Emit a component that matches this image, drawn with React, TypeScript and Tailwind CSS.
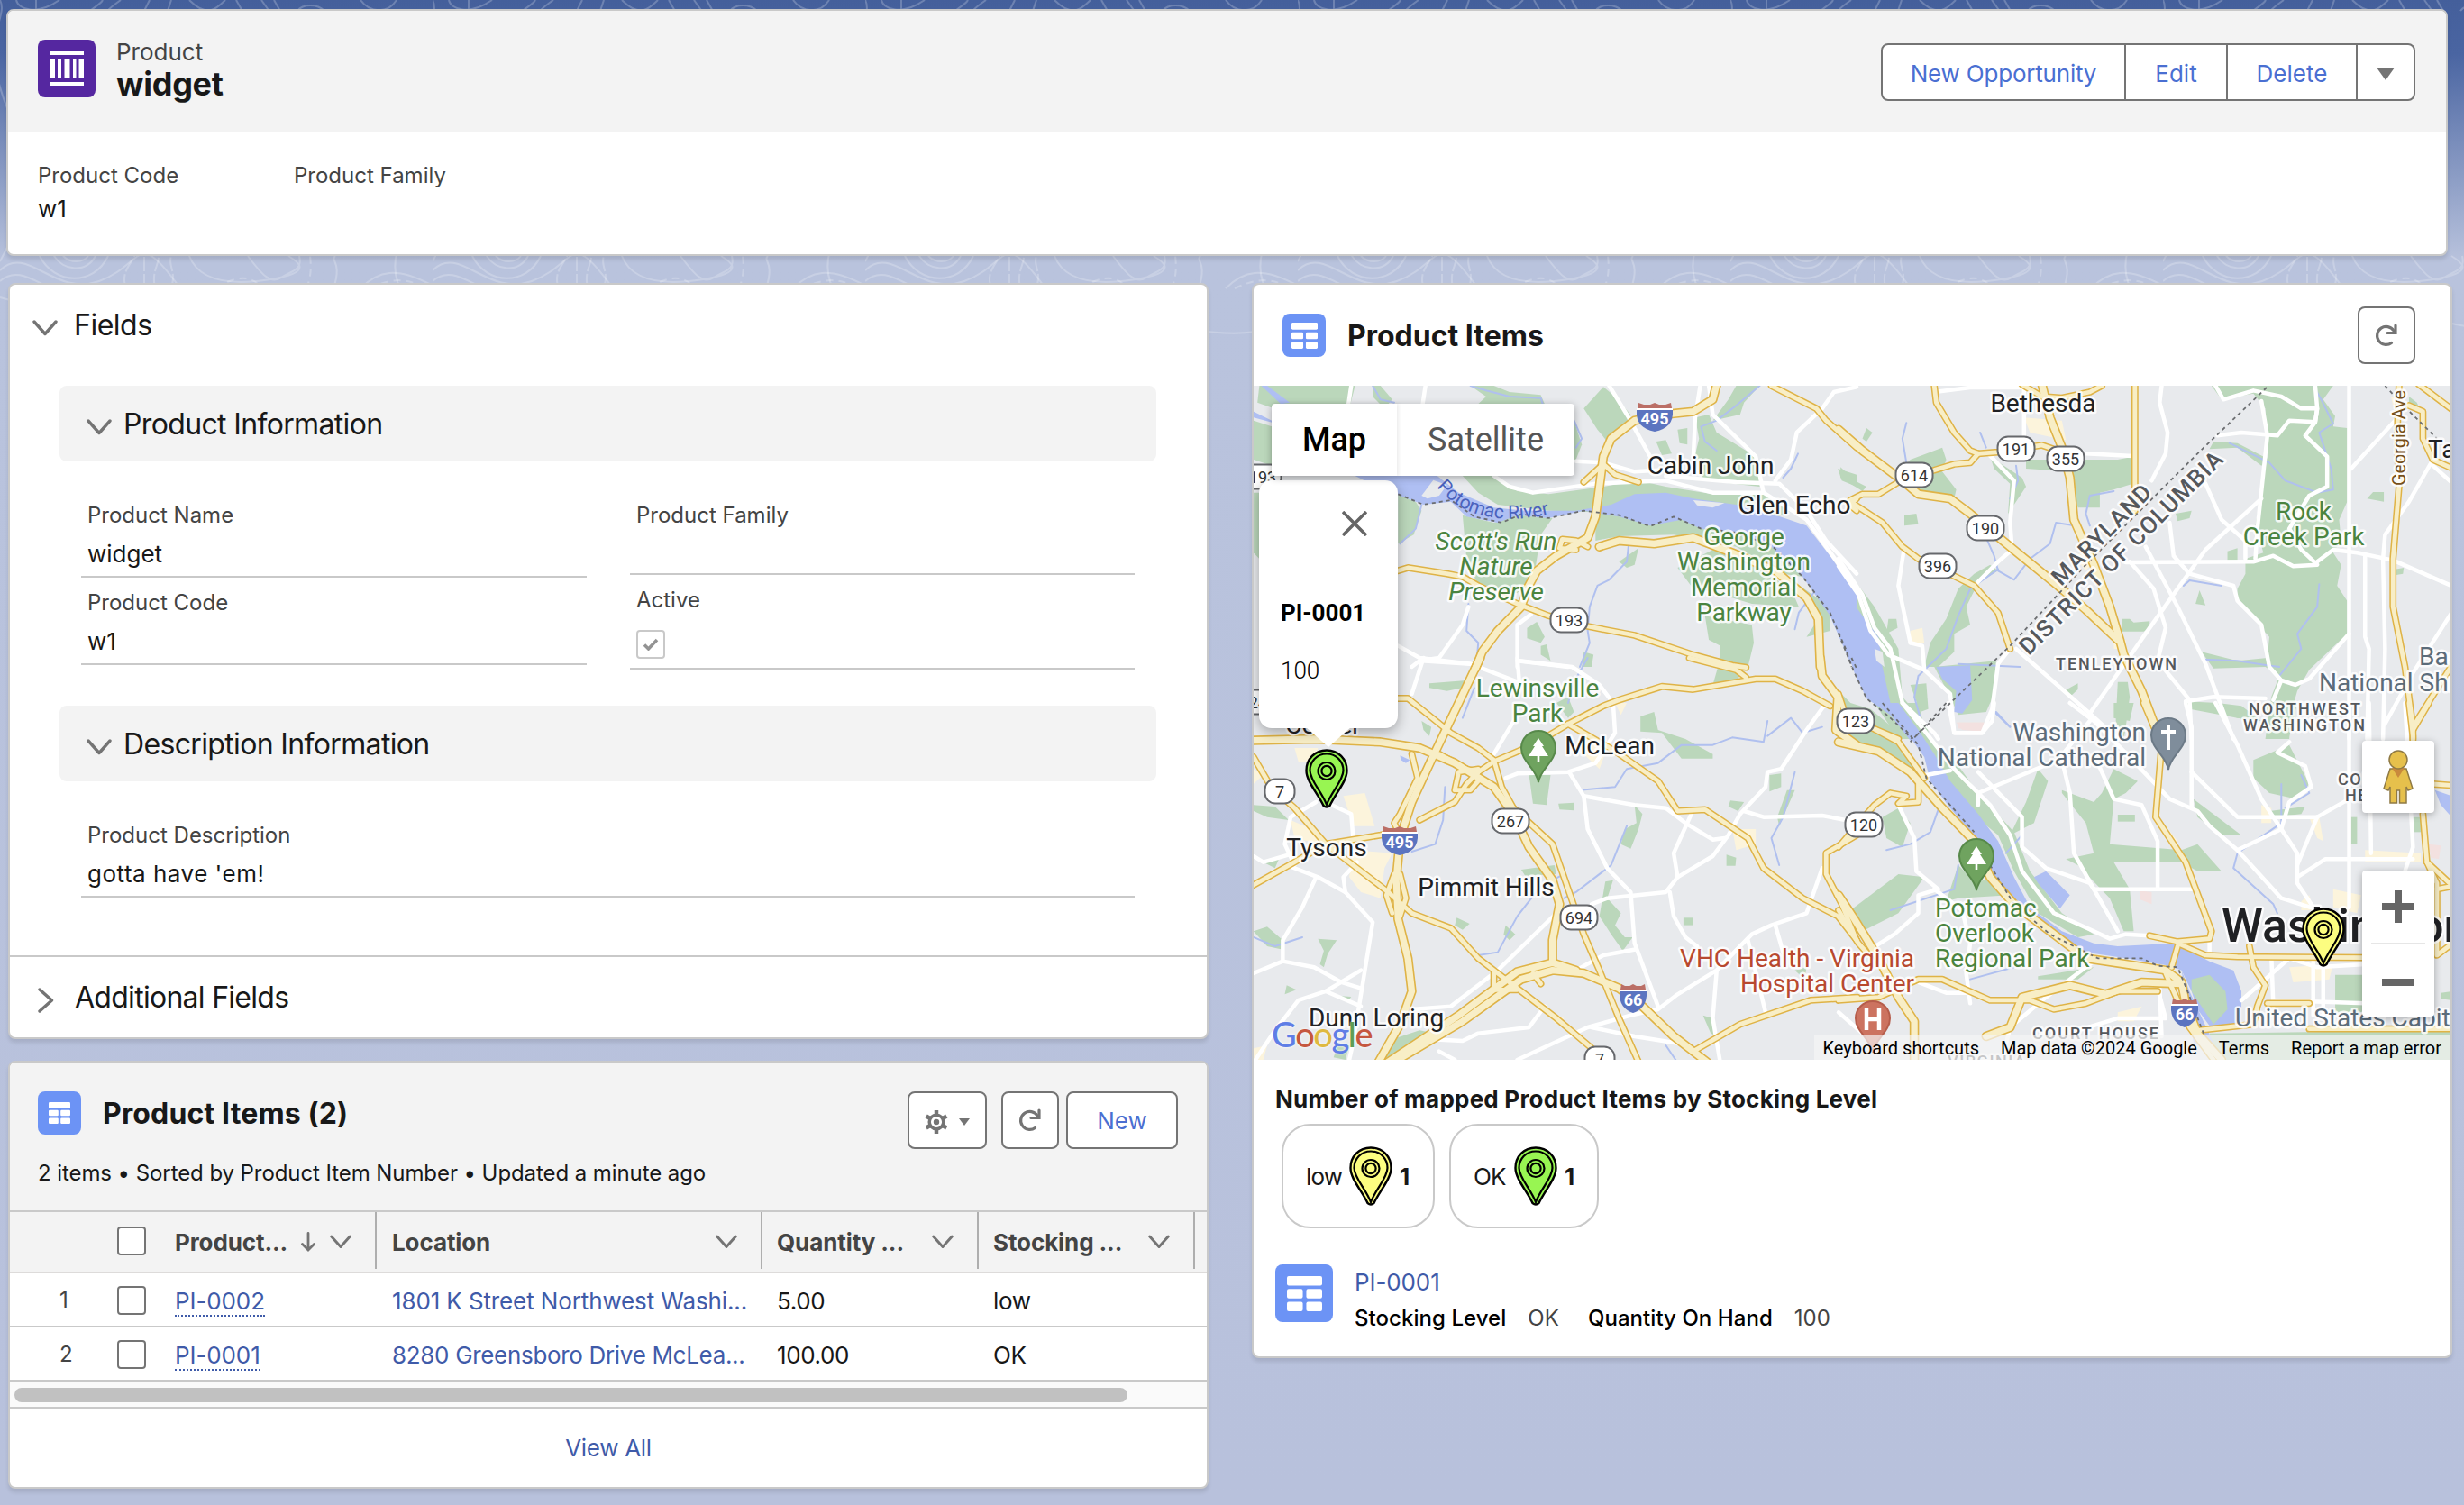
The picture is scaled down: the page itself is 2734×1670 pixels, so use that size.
import React from "react";

type Quad = {
  t: string;
  green: string[];
  beige: string[];
  pink: string[];
  water: string[];
  streams: string[];
  island: string[];
  white: string[];
  mid: string[];
  wide: string[];
  dash: string[];
};

const QUADS: Quad[] = [
  {
    t: "translate(1380 300) scale(.4337 .3333)",
    green: [
      "40,384 285,384 270,460 100,470 35,440",
      "330,384 350,384 380,430 360,460 330,420",
      "580,384 640,384 680,405 760,415 770,445 600,445 620,420",
      "920,388 950,420 990,480 985,520 930,570 905,530 870,460",
      "845,500 865,580 850,630 840,640",
      "25,500 72,520 72,650 25,630",
      "560,684 640,684 700,735 780,745 920,720 1010,700 1080,720 1200,745 1330,740 1400,800 1350,830 1250,790 1130,770 1050,750 960,800 900,805 780,800 650,780 600,740",
      "560,815 640,840 700,815 790,825 760,880 745,1000 700,1075 600,1050 570,960",
      "395,745 440,770 455,800 435,880 395,910",
      "900,805 1040,830 1130,830 1230,850 1360,900 1430,1020 1380,1010 1260,920 1180,900 1100,880 960,885 900,900",
      "1110,990 1200,930 1300,980 1400,1060 1420,1120 1300,1110 1200,1070 1150,1060",
      "1180,1150 1300,1180 1305,1240 1290,1320 1215,1320 1220,1250 1190,1230",
      "725,1190 750,1170 770,1220 760,1240 725,1225",
      "760,1250 775,1245 785,1300 760,1280",
      "1155,490 1190,480 1210,540 1260,580 1310,620 1320,720 1180,700 1150,640 1165,560",
      "1260,384 1320,384 1280,440 1270,480 1200,500 1240,430",
      "1055,570 1080,565 1095,610 1070,615",
      "1110,530 1135,525 1135,580 1115,575",
      "1520,660 1568,680 1568,720 1530,700",
      "1400,1030 1500,1120 1500,1200 1440,1220 1470,1160",
      "960,970 1010,925 1000,980 980,990",
      "25,740 40,740 40,960 25,940",
      "870,1270 895,1280 890,1320 865,1320",
    ],
    beige: [],
    pink: [],
    water: [
      "285,684 495,684 550,740 640,790 720,800 850,800 940,780 1000,745 1080,740 1150,760 1260,780 1350,810 1440,850 1500,950 1568,1080 1568,1330 1550,1300 1500,1150 1430,1020 1350,920 1250,870 1170,860 1120,830 1040,850 960,820 870,800 780,825 700,815 650,840 570,820 530,770 460,780 400,750 340,720",
      "45,384 60,384 118,440 95,445",
      "25,470 72,500 72,506 25,490",
    ],
    streams: [
      "330,384 350,430 385,440",
      "580,384 620,400 680,420 760,425 765,445",
      "455,780 440,860 400,910",
      "985,910 980,970 935,1030 905,1050 885,1120 880,1200 885,1240 860,1320",
      "575,1110 570,1200 600,1240 595,1320",
      "850,590 865,560 845,500",
      "1320,384 1260,450 1210,500 1170,520 1180,570 1210,600",
      "1418,610 1400,660 1380,690",
      "1460,1070 1420,1140 1410,1195",
    ],
    island: ["455,750 485,698 520,715 500,750 470,760", "1150,765 1230,775 1200,790 1160,782"],
    white: [
      "275,384 268,444",
      "465,384 458,444",
      "935,384 985,490 1040,620",
      "1168,384 1155,490 1150,630",
      "1190,384 1200,480 1310,620 1330,740",
      "1568,388 1510,405 1480,460 1415,540 1400,630 1360,700",
      "640,684 680,720 740,740 900,710 1080,700 1200,740 1330,740 1440,830 1490,920 1568,1060",
      "1080,685 1260,705 1370,710 1440,800 1490,900 1568,1010",
      "850,635 920,640 1000,670 1060,665",
      "395,1250 450,1290 580,1310",
      "575,1120 560,1180 500,1290 450,1300 430,1320",
      "735,1145 700,1180 700,1320",
      "700,1300 830,1320",
    ],
    mid: [
      "1350,384 1465,460 1490,500 1568,590",
      "395,1000 420,990 520,1010 560,1020 600,1050 700,1110 780,1150 880,1185 1000,1215 1150,1280 1250,1315 1285,1322",
      "870,705 920,645 950,680 1010,705",
      "880,920 850,900 815,895 808,925 850,930",
      "1568,760 1550,780 1568,800",
    ],
    wide: [
      "1210,380 1200,430 1150,470 1090,478 1000,500 940,560 920,620 910,720 900,820 880,890 800,950 750,1000 725,1060 710,1120 650,1200 610,1270 593,1325",
      "910,920 960,900 1050,910 1150,890 1250,940 1360,1000 1440,1090 1470,1160 1475,1320",
    ],
    dash: ["395,745 460,780 530,765 590,820 660,840 710,812 780,825 870,800 900,805 960,815 1040,852 1100,820 1170,860 1250,870 1350,915 1430,1020 1500,1140 1540,1260 1555,1320"],
  },
  {
    t: "translate(2040 420) scale(.4426 .3333)",
    green: [
      "935,24 1240,24 1215,70 1245,125 1240,160 1275,165 1275,410 1255,470 1260,540 1240,580 1260,620 1250,690 1275,740 1275,850 1180,970 1150,1040 1135,1110 1130,1200 1070,1200 1085,1060 1105,990 1070,960 940,965 910,910 1000,940 1075,930 1080,860 1040,800 1000,740 1000,700 1020,650 1020,600 1065,580 1045,490 1075,260 1070,100 1040,50 960,70",
      "470,270 700,270 738,260 738,350 690,370 655,380 655,430 600,430 580,310 470,300",
      "940,210 1000,215 1080,270 1060,290 1000,230 930,235",
      "160,300 180,270 260,230 270,270 260,310 295,370 290,400 190,370",
      "70,165 85,180 70,210 60,200",
      "165,455 195,450 200,485 165,490",
      "5,295 40,340 70,360 60,375 5,330",
      "845,450 885,440 880,465 850,475",
      "1325,400 1340,378 1367,378 1367,410",
      "975,575 1000,565 1000,605 975,605",
      "905,705 920,755 895,750",
      "380,620 400,640 350,680 320,760 330,820 290,850 290,910 250,960 215,960 230,880 270,800 300,700 340,650",
      "240,960 395,940 390,1050 370,1110 300,1120 280,1060",
      "380,260 460,330 470,360 440,420 425,450 430,350 390,300",
      "710,800 730,800 740,812 780,808 780,830 765,842 710,842",
      "565,1040 600,1015 600,1035 580,1060",
      "700,1010 725,1010 730,1060 720,1160 715,1200 695,1140",
      "870,1075 950,1080 1010,1090 1060,1140 1000,1130 950,1100 880,1100",
      "0,600 90,760 150,900 160,1060 220,1150 230,1200 150,1200 100,1100 60,1020 60,880",
      "180,1020 220,1015 225,1100 205,1110",
      "1395,635 1417,630 1415,650 1395,655",
      "125,800 145,800 148,830 120,850",
      "0,1040 30,1080 80,1100 170,1200 0,1200",
      "1430,60 1450,80 1460,110 1430,85",
    ],
    beige: [
      "465,130 560,140 570,205 480,180",
      "180,840 210,830 215,880 180,885",
      "690,870 720,870 720,900 690,900",
      "1385,60 1410,60 1410,90 1390,90",
      "590,590 610,580 640,610 620,640",
    ],
    pink: ["300,1145 365,1145 365,1175 300,1165"],
    water: [
      "0,680 60,790 100,860 110,960 130,1080 190,1160 210,1205 180,1205 130,1120 70,1065 40,980 20,900 0,850",
      "245,960 330,955 335,1070 310,1115 290,1110 295,1040 260,1000",
    ],
    streams: [
      "170,148 160,200 170,280",
      "355,180 370,230",
      "445,290 450,340 430,400",
      "400,635 330,700 300,790 270,900 200,990 190,1060 205,1130",
      "585,488 545,480 530,550 480,600 440,670 400,640 390,590 370,530",
      "690,375 630,390 620,450 630,490",
      "980,215 1080,280 1120,340 1200,380 1240,370 1235,300 1205,180 1240,150 1210,70 1190,24",
      "1205,685 1200,760 1150,850 1160,900 1105,990",
      "865,690 880,672 960,690",
      "915,935 1000,940 1075,955 1105,960",
      "395,1110 430,1160",
      "300,950 455,960",
    ],
    island: ["90,900 110,910 115,960 95,940"],
    white: [
      "810,24 805,80 825,180 820,250 785,340",
      "240,45 330,30 460,30",
      "465,24 465,190",
      "945,24 965,70 1040,40 1110,60 1160,100 1200,100 1195,145 1130,140 1100,190 1010,180 950,190",
      "1060,75 1075,190 1050,500 1045,600",
      "1195,24 1200,100 1195,145 1170,190 1225,260 1225,360 1180,390 1130,500 1160,570 1200,620 1140,625 1090,590 1040,610 720,612",
      "1280,24 1280,1200",
      "1200,610 1240,570 1300,580 1390,605 1537,690",
      "1395,140 1285,300",
      "1490,270 1430,410 1370,520 1365,600 1370,900 1365,1200",
      "1320,590 1320,860 1330,900 1325,1200",
      "620,250 738,258",
      "375,250 440,340 430,480 435,570 400,610 340,690",
      "0,600 60,720 90,830 130,900 160,1080 240,1180 250,1200",
      "0,625 50,720 80,840 125,920 215,970",
      "165,560 150,690 180,880",
      "180,880 210,890 215,970 280,1050 290,1180 360,1180 385,1100 400,950 430,900",
      "445,900 630,1115 700,1200",
      "630,1115 780,830 920,570 1060,400",
      "920,350 960,470 1020,540 1020,600",
      "770,560 850,760 920,950 990,1200",
      "730,610 790,700 820,830 800,940 880,1070 885,1200",
      "830,480 840,590 880,650 990,690 1000,740 1060,820 1080,960 1110,1005 1145,1020 1180,1000 1280,850",
      "870,1075 940,1060 1070,1065",
      "1537,780 1440,980 1370,1150",
      "1110,1005 1090,1070",
      "1490,290 1540,350",
    ],
    mid: [
      "240,24 245,80 290,180 330,240 350,250 400,245 510,222 550,240 560,250",
      "30,405 60,385 100,385 150,345 240,305 290,285 330,280 350,250",
      "30,410 110,480 160,560 200,600 340,690 400,780 430,900",
      "743,24 743,440",
      "660,24 630,45 560,65 510,60 460,20",
      "1430,90 1465,110 1465,200 1490,270 1540,300",
      "1455,20 1540,105",
      "1405,24 1400,200 1405,360 1390,600 1390,760 1420,960 1440,1160 1440,1200",
      "1440,1160 1540,950",
      "0,1050 15,1110 60,1150 150,1200",
    ],
    wide: [
      "0,170 60,240 160,340 200,385 280,400 330,450 430,560 550,690 620,770 700,870",
      "510,20 530,130 560,230 580,330 590,470 640,620 680,760 705,870 715,920 760,1040 800,1180 805,1200",
    ],
    dash: [
      "1073,30 900,250 620,620 430,890 190,1195",
      "1370,24 1420,95 1500,200",
      "0,850 40,980 70,1065 130,1130 185,1200",
    ],
  },
  {
    t: "translate(1380 730) scale(.4337 .3333)",
    green: [
      "475,85 570,75 560,100 520,110 475,100",
      "455,210 480,230 475,260 460,240",
      "730,390 785,390 775,490 740,485",
      "805,485 845,482 845,508 808,505",
      "25,490 80,495 115,540 60,530 25,510",
      "1015,195 1050,180 1060,240 1130,270 1200,320 1200,335 1120,335 1070,250 1015,245",
      "800,150 830,130 845,180 830,200",
      "1345,390 1375,385 1375,430 1345,445",
      "1245,475 1280,480 1265,510 1240,495",
      "1000,490 1020,520 1010,570 990,635 965,620 975,570 1005,550",
      "1235,655 1260,665 1258,692 1235,692",
      "710,705 795,690 800,720 720,725",
      "925,745 945,740 930,800 965,850 950,890 975,930 995,930 970,975 940,920 910,860",
      "545,865 578,885 560,905 540,890",
      "670,890 695,920 680,940 665,920",
      "25,910 60,895 100,940 95,970 60,960",
      "190,935 238,940 215,985 205,1030 195,1020 205,975",
      "1125,865 1150,865 1150,890 1125,890",
      "1175,1190 1200,1200 1210,1260 1195,1250",
      "110,1090 135,1105 105,1120",
      "1220,0 1295,0 1270,60 1250,90 1200,90",
      "240,1125 275,1128 265,1145",
      "50,680 90,670 80,700",
      "1500,70 1568,200 1568,310 1540,200",
      "1390,440 1410,440 1390,500 1370,560 1365,530",
      "450,1240 490,1250 400,1310 360,1338 380,1270",
      "240,1290 270,1290 260,1338 230,1330",
      "1410,1040 1440,1030 1435,1070",
    ],
    beige: [
      "255,460 310,450 335,560 280,560",
      "280,640 380,650 360,700 350,800 300,780 270,730",
      "120,540 190,580 200,620 130,600",
      "860,250 930,300 910,370 870,320",
      "1250,570 1310,570 1310,620 1260,640",
      "950,150 980,150 965,190",
      "130,300 190,300 180,350 140,345",
      "760,1160 820,1200 800,1220",
      "25,1300 60,1290 50,1338 25,1338",
      "25,370 50,390 25,420",
    ],
    pink: [],
    water: ["400,325 425,340 415,350 402,340"],
    streams: [
      "880,0 845,80 830,150",
      "590,100 560,200",
      "860,440 950,430 980,370 1060,350 1120,290 1200,290 1250,265 1330,280 1340,210",
      "1340,260 1400,200 1430,250 1480,230",
      "1410,380 1380,530 1350,600 1370,690",
      "515,430 510,540 490,620 430,645",
      "980,560 940,690 850,780 820,800",
      "820,720 760,760 700,860 650,980 600,990",
      "25,930 80,960 150,930",
      "1080,1290 1105,1338",
    ],
    island: [],
    white: [
      "455,10 580,20 640,50 700,80",
      "460,0 430,120",
      "700,0 705,80",
      "705,10 840,30 910,90 945,150 950,250 900,350 830,380 700,385 670,400",
      "700,190 640,320",
      "835,385 870,460 880,570 930,700 990,780 1000,950 1060,1160",
      "870,460 1000,490 1080,500 1130,550 1200,605 1230,600",
      "1490,150 1440,240 1375,370 1340,380 1335,430 1270,520 1240,590 1200,660 1110,730 1080,780 930,800 890,820",
      "1145,520 1100,650 1110,730",
      "1280,510 1330,530 1480,525 1540,540",
      "1090,780 1100,860 1130,930 1160,960",
      "1480,700 1440,850 1350,890 1300,920 1210,1040 1110,1120 1060,1170 990,1190 880,1230 700,1338",
      "1210,1040 1200,1200 1218,1338",
      "1290,940 1335,1180",
      "1360,890 1380,980",
      "800,850 650,1040 530,1160 430,1170",
      "1005,970 920,990 850,1040",
      "25,660 50,680 130,650",
      "110,690 190,730 260,780 330,880 310,1040 280,1280 270,1338",
      "185,730 150,830 100,940 100,1010 25,1050",
      "100,1010 180,1030 250,1080 300,1100",
      "300,1040 210,1110 140,1140 80,1240 30,1338",
      "210,1110 300,1160",
      "185,480 120,530 105,620 130,690",
      "225,490 275,520 280,600",
      "290,680 255,730 260,780",
      "480,1270 560,1275 600,1250 730,1230 770,1160",
      "890,1230 1000,1260 1120,1285",
      "500,1310 540,1338",
    ],
    mid: [
      "395,135 420,135 530,250 600,300 640,340 660,430 690,500",
      "600,380 640,345 740,290 830,220 920,160 960,140 1070,95 1150,105 1310,70 1360,70 1430,110 1500,160",
      "1140,0 1260,40 1285,65",
      "830,220 950,310 1060,410 1110,510 1180,505 1290,600 1330,700 1430,800 1520,860 1568,940",
      "690,500 740,560 790,620 830,770 870,920 910,1040 960,1200 1010,1345",
      "25,330 70,430 130,500 210,620 310,720 370,780 430,850 530,900 600,1000 660,1060 700,1100 800,1200 900,1310",
      "20,760 130,680 210,620 350,590 390,580",
      "1568,590 1490,650 1490,720 1530,820 1568,940",
      "1150,1310 1270,1220 1450,1140 1570,1130",
      "430,320 445,400 400,520 385,550 400,590",
      "450,540 540,480 570,420 600,380",
      "600,370 550,380 540,440 580,440 600,410",
      "640,1050 640,1105 700,1105",
      "740,1050 760,1085",
      "385,720 365,790 380,850",
      "400,720 415,800 400,860",
      "500,320 570,370 600,380",
    ],
    wide: [
      "20,275 180,270 350,280 450,300 540,350 640,430 690,520 730,630 790,740 808,820 790,940 790,1010",
      "605,0 480,340 430,480 400,600 390,740 395,870 420,1000 430,1110 400,1220 345,1345",
      "370,1345 550,1190 700,1045 790,1015 850,1040",
      "385,1345 560,1210 710,1070 790,1040 870,1050 960,1100 1020,1160 1100,1260 1185,1345",
      "1475,0 1480,60 1520,130 1515,240 1568,290",
    ],
    dash: ["1555,0 1570,40"],
  },
  {
    t: "translate(2040 780) scale(.4426 .3333)",
    green: [
      "130,0 200,0 220,110 290,190 350,300 440,430 480,560 560,700 640,770 600,780 500,700 440,560 400,440 300,330 240,240 200,120",
      "0,60 110,100 180,180 220,270 340,440 330,440 180,230 100,160 0,120",
      "500,220 525,260 490,400 430,440 470,330",
      "560,290 640,330 660,300 690,220 750,260 720,300 690,320 680,470 860,490 900,470 960,560 900,560 860,530 690,530 730,620 740,760 715,760 680,650 600,540 570,520 640,500 620,400 560,300",
      "700,372 743,372 743,395 700,395",
      "690,0 740,0 730,60 690,50",
      "110,380 150,350 180,400 160,480 120,450",
      "30,690 150,570 215,580 150,700 60,760",
      "300,540 345,600 400,570 430,640 300,650 270,660",
      "1040,190 1130,140 1180,270 1150,320 1080,300 1040,250",
      "890,320 1010,440 960,440 900,380",
      "1080,360 1170,345 1160,370 1090,380",
      "1285,380 1300,380 1300,470 1285,470",
      "1245,905 1320,905 1320,1030 1245,1030",
      "1510,965 1537,960 1537,990 1510,985",
      "1440,380 1460,380 1460,430 1440,430",
      "930,1100 1537,1090 1537,1188 930,1188",
      "1070,0 1150,0 1130,110 1080,60",
      "500,910 640,880 600,920 500,920",
      "870,0 960,10 1060,60 1000,50 880,20",
    ],
    beige: [
      "1320,490 1460,500 1460,530 1320,530",
      "1130,880 1240,870 1230,920 1140,930",
      "1240,620 1310,640 1300,700 1240,680",
      "1180,380 1205,380 1215,460 1200,450",
      "1060,340 1085,350 1085,400 1060,400",
      "700,1030 760,1010 740,1060 700,1060",
      "820,410 850,460 835,470 815,430",
      "1160,660 1180,640 1190,690 1160,690",
    ],
    pink: ["295,65 365,65 360,95 310,90", "755,625 785,630 785,670 757,655", "1480,470 1510,475 1505,520 1485,515"],
    water: [
      "90,0 150,0 200,90 240,170 280,260 350,370 400,460 440,580 480,680 560,760 640,800 700,810 840,800 930,860 990,890 1010,960 1010,1080 930,1075 900,1020 885,960 860,890 830,875 720,850 620,830 520,750 440,670 390,580 370,490 280,350 230,260 215,180 150,60",
      "490,580 520,560 580,640 555,685 500,600",
      "1495,290 1537,310 1537,380 1510,340",
      "860,890 880,960 960,1190 890,1130",
    ],
    streams: [
      "395,35 430,80",
      "250,355 230,430 180,470 120,490",
      "300,540 290,620 130,690",
      "460,440 420,500",
      "1110,270 1110,400 1000,500 990,550 1090,670 1100,700",
      "1160,240 1180,300 1120,350",
      "330,920 440,880",
    ],
    island: [],
    white: [
      "160,0 220,100 290,220 380,340 430,440 460,560 540,700 640,760 680,785 720,770 780,775",
      "220,240 280,225",
      "275,0 290,100 360,100 385,60 390,0",
      "580,0 640,60 700,140 780,250 830,320 900,360 930,410 1000,490 1110,650 1230,700",
      "630,60 550,190 350,300 350,340",
      "870,0 885,80 885,350",
      "945,0 1000,140 1060,320 1150,500 1150,600 1200,700",
      "885,230 1000,380 1200,380 1320,290",
      "1130,130 1100,165 1170,210 1185,280 1130,330 1110,420 1000,490",
      "560,190 580,300 590,500 640,620 700,760",
      "350,230 460,380 460,480 520,550 630,600 640,620 885,620",
      "650,200 690,320 760,340 800,460 800,620",
      "1280,0 1280,680",
      "1150,580 1220,520 1320,520 1440,520",
      "150,340 190,450 195,560 250,620 200,640 200,700 140,770 80,820",
      "240,620 310,690 330,800 320,900 330,1000",
      "0,1030 60,1100",
      "930,780 930,840",
      "1085,840 1090,1010",
      "1190,860 1190,1040",
      "1215,860 1215,1040",
      "1090,990 1320,1000",
      "1010,990 1130,850 1200,880 1320,870",
      "1330,0 1335,500",
      "1420,0 1440,480 1420,560",
      "1200,380 1150,540",
      "200,930 270,965 340,965",
      "410,1190 430,1080 520,980 620,880 650,850",
      "800,950 820,1050 700,1050 600,1090",
      "805,950 810,1110",
    ],
    mid: [
      "765,0 810,140 795,380 870,530 935,760 930,785 850,795 780,775",
      "80,80 150,130 215,250",
      "0,480 90,340 130,300 170,310 150,335 200,330 200,270",
      "850,800 920,840 1000,845 1320,848",
      "850,810 835,880",
      "0,990 100,980 200,920 260,920 380,990 480,990 540,1020 620,1000 700,960 800,960",
      "1030,810 1040,880 1070,940 1050,1010 1040,1070 900,1090",
      "1430,0 1440,110 1440,200",
      "1480,0 1440,90",
      "1490,270 1540,275",
      "1465,370 1475,530 1500,600 1500,840 1540,800",
      "1475,530 1540,610 1500,620",
      "820,900 880,1080 940,1188",
      "1180,1085 1540,1085",
      "0,690 50,800 70,830",
      "1075,1000 1180,1000",
    ],
    wide: [
      "0,130 100,160 180,230 260,350 340,460 380,580 440,670 520,750 620,850 720,870 820,890 860,930 870,1000 900,1100 960,1188",
      "0,640 40,720 100,850 150,980 190,1060 190,1188",
      "370,1110 430,1080 460,980 580,940 670,970 760,930 860,935",
    ],
    dash: [
      "110,0 200,140 220,250 340,430",
      "270,0 180,130",
      "380,540 440,670 530,770 650,850 760,850 800,875 850,880 875,960 915,1100",
    ],
  },
];

type Layer = Exclude<keyof Quad, "t">;

function Polys({ layer, fill }: { layer: Layer; fill: string }) {
  return (
    <>
      {QUADS.map((q, i) => (
        <g key={i} transform={q.t} fill={fill}>
          {q[layer].map((p, j) => (
            <polygon key={j} points={p} />
          ))}
        </g>
      ))}
    </>
  );
}

function Lines({ layer, stroke, w, dash }: { layer: Layer; stroke: string; w: number; dash?: string }) {
  return (
    <>
      {QUADS.map((q, i) => (
        <g key={i} transform={q.t} fill="none" stroke={stroke} strokeWidth={w} strokeLinejoin="round" strokeLinecap={dash ? "butt" : "round"} strokeDasharray={dash}>
          {q[layer].map((p, j) => (
            <polyline key={j} points={p} vectorEffect="non-scaling-stroke" />
          ))}
        </g>
      ))}
    </>
  );
}

function L({ x, y, c = "#202124", a = "middle", s = 28, w = 400, sp, len, i, children }: { x: number; y: number; c?: string; a?: "start" | "middle" | "end"; s?: number; w?: number; sp?: number; len?: number; i?: boolean; children: string }) {
  return (
    <text x={x} y={y} fill={c} textAnchor={a} fontSize={s} fontWeight={w} letterSpacing={sp} textLength={len} fontStyle={i ? "italic" : undefined} stroke="#fff" strokeOpacity={0.85} strokeWidth={5} strokeLinejoin="round" paintOrder="stroke">
      {children}
    </text>
  );
}

function Shield({ x, y, n }: { x: number; y: number; n: string }) {
  const w = n.length > 1 ? 41 : 33;
  return (
    <g>
      <rect x={x - w / 2} y={y - 13.5} width={w} height={27} rx={11.5} fill="#fff" stroke="#66686c" strokeWidth={2} />
      <text x={x} y={y + 6.5} fontSize={18} textAnchor="middle" fill="#333">
        {n}
      </text>
    </g>
  );
}

function Interstate({ x, y, n }: { x: number; y: number; n: string }) {
  const k = n.length > 2 ? 20 : 15;
  return (
    <g transform={`translate(${x} ${y})`}>
      <path d={`M${-k} -8 C${-k - 1} 6 ${-k + 6} 13 0 16 C${k - 6} 13 ${k + 1} 6 ${k} -8Z`} fill="#5b74c0" />
      <path d={`M${-k + 1} -10 L${-k + 2} -16 L${-k * 0.6} -14 L${-k * 0.25} -14 L0 -16 L${k * 0.25} -14 L${k * 0.6} -14 L${k - 2} -16 L${k - 1} -10Z`} fill="#bb6f66" />
      <path d={`M${-k} -9H${k}`} stroke="#fff" strokeWidth={2} />
      <text y={8} fontSize={18} fontWeight={700} fill="#fff" textAnchor="middle">
        {n}
      </text>
    </g>
  );
}

function Pin({ x, y, fill, edge, children }: { x: number; y: number; fill: string; edge: string; children: React.ReactNode }) {
  return (
    <g transform={`translate(${x} ${y})`}>
      <path d="M0 57 C-2 42 -19 34 -19 19 A19 19 0 1 1 19 19 C19 34 2 42 0 57Z" fill={fill} stroke={edge} strokeWidth={2} />
      {children}
    </g>
  );
}

function Tree() {
  return <path d="M0 8 L6 17 H4 L11 28 H1.3 V34 H-1.3 V28 H-11 L-4 17 H-6Z" fill="#fff" />;
}

function Marker({ color }: { color: string }) {
  return (
    <svg className="h-[66px] w-12 shrink-0" viewBox="0 0 48 66">
      <path d="M24 1.5 C11 1.5 1.5 11 1.5 24 C1.5 36 14 49 20.500 63 Q24 66 27.500 63 C34 49 46.500 36 46.500 24 C46.500 11 37 1.500 24 1.500Z" fill={color} stroke="#000" strokeWidth="2.400" />
      <path d="M24 5.500 C13 5.500 5.500 14 5.500 24 C5.500 35 19 48 24 62 C29 48 42.500 35 42.500 24 C42.500 14 35 5.500 24 5.500Z" fill="none" stroke="#000" strokeWidth="2.200" />
      <circle cx="24" cy="24.500" r="9.500" fill="none" stroke="#000" strokeWidth="2.200" />
      <circle cx="24" cy="24.500" r="5.600" fill="none" stroke="#000" strokeWidth="2.200" />
    </svg>
  );
}

const GREEN = "#4a8440";
const SLATE = "#5c6c7a";
const GREY = "#55585c";

function MapCanvas() {
  return (
    <svg className="absolute inset-0 h-full w-full" viewBox="1391 428 1328 748" fontFamily="Roboto, sans-serif">
      <rect x="1391" y="428" width="1328" height="748" fill="#e8eaed" />
      <Polys layer="green" fill="#bbd7bb" />
      <Polys layer="beige" fill="#fcf4dc" />
      <Polys layer="pink" fill="#f3e1e0" />
      <Polys layer="water" fill="#afbff3" />
      <Polys layer="island" fill="#e8eaed" />
      <g transform="translate(2040 780) scale(.4426 .3333)">
        <polygon points="885,920 930,905 970,960 975,1020 940,1070 910,1010 885,960" fill="#bbd7bb" />
      </g>
      <Lines layer="streams" stroke="#b0c0ef" w={2} />
      <Lines layer="white" stroke="#fff" w={4.5} />
      <Lines layer="mid" stroke="#dfb346" w={7.800} />
      <Lines layer="wide" stroke="#dfb346" w={10.500} />
      <Lines layer="mid" stroke="#f8eec6" w={4.800} />
      <Lines layer="wide" stroke="#f8eec6" w={7.300} />
      <Lines layer="dash" stroke="#6b6d70" w={1.8} dash="4 4" />

      <Shield x={1401} y={529} n="193" />
      <Shield x={1401} y={779} n="243" />
      <Shield x={1741} y={688} n="193" />
      <Shield x={2124} y={527} n="614" />
      <Shield x={2237} y={498} n="191" />
      <Shield x={2292} y={509} n="355" />
      <Shield x={2203} y={586} n="190" />
      <Shield x={2150} y={628} n="396" />
      <Shield x={2059} y={800} n="123" />
      <Shield x={2068} y={915} n="120" />
      <Shield x={1420} y={878} n="7" />
      <Shield x={1676} y={911} n="267" />
      <Shield x={1752} y={1018} n="694" />
      <Shield x={1775} y={1175} n="7" />
      <Interstate x={1836} y={463} n="495" />
      <Interstate x={1553} y={933} n="495" />
      <Interstate x={1812} y={1108} n="66" />
      <Interstate x={2424} y={1124} n="66" />

      <L x={2267} y={457}>Bethesda</L>
      <L x={1898} y={526}>Cabin John</L>
      <L x={1991} y={570}>Glen Echo</L>
      <L x={1660} y={610} c={GREEN} i>Scott's Run</L>
      <L x={1660} y={638} c={GREEN} i>Nature</L>
      <L x={1660} y={666} c={GREEN} i>Preserve</L>
      <L x={1935} y={605} c={GREEN}>George</L>
      <L x={1935} y={633} c={GREEN}>Washington</L>
      <L x={1935} y={661} c={GREEN}>Memorial</L>
      <L x={1935} y={689} c={GREEN}>Parkway</L>
      <path id="river" d="M1594 540 Q1636 590 1722 570" fill="none" />
      <text fontSize={21} fill="#4a62bd">
        <textPath href="#river">Potomac River</textPath>
      </text>
      <L x={1706} y={773} c={GREEN}>Lewinsville</L>
      <L x={1706} y={801} c={GREEN}>Park</L>
      <L x={1786} y={837}>McLean</L>
      <L x={1468} y={814}>Corner</L>
      <L x={1472} y={950}>Tysons</L>
      <L x={1649} y={994}>Pimmit Hills</L>
      <L x={1527} y={1139}>Dunn Loring</L>
      <L x={2124} y={1073} a="end" c="#b8492f">VHC Health - Virginia</L>
      <L x={2124} y={1101} a="end" c="#b8492f">Hospital Center</L>
      <L x={2147} y={1017} a="start" c={GREEN}>Potomac</L>
      <L x={2147} y={1045} a="start" c={GREEN}>Overlook</L>
      <L x={2147} y={1073} a="start" c={GREEN}>Regional Park</L>
      <L x={2381} y={822} a="end" c={SLATE}>Washington</L>
      <L x={2381} y={850} a="end" c={SLATE}>National Cathedral</L>
      <L x={2281} y={743} a="start" c={GREY} s={18} w={500} len={134}>TENLEYTOWN</L>
      <L x={2495} y={793} a="start" c={GREY} s={18} w={500} len={124}>NORTHWEST</L>
      <L x={2489} y={811} a="start" c={GREY} s={18} w={500} len={135}>WASHINGTON</L>
      <L x={2556} y={577} c={GREEN}>Rock</L>
      <L x={2556} y={605} c={GREEN}>Creek Park</L>
      <L x={2684} y={738} a="start" c={SLATE}>Basilica</L>
      <L x={2573} y={767} a="start" c={SLATE}>National Shrine</L>
      <L x={2694} y={508} a="start">Takoma</L>
      <L x={2255} y={1153} a="start" c={GREY} s={18} w={500} len={140}>COURT HOUSE</L>
      <L x={2161} y={1184} a="start" c={GREY} s={18} w={500} len={86}>VIRGINIA</L>
      <L x={2594} y={871} a="start" c={GREY} s={18} w={500} sp={1.6}>COLUMBIA</L>
      <L x={2602} y={889} a="start" c={GREY} s={18} w={500} sp={1.6}>HEIGHTS</L>
      <g transform="translate(2669 539) rotate(-90)">
        <L x={0} y={0} a="start" c="#76501c" s={20} len={106}>Georgia Ave</L>
      </g>
      <g transform="translate(2287 651) rotate(-45.3)">
        <L x={0} y={0} a="start" c={GREY} s={26} w={500} len={145}>MARYLAND</L>
      </g>
      <g transform="translate(2251 728) rotate(-44.9)">
        <L x={0} y={0} a="start" c={GREY} s={26} w={500} len={307}>DISTRICT OF COLUMBIA</L>
      </g>
      <L x={2465} y={1045} a="start" s={52} w={500}>Washington</L>
      <L x={2480} y={1139} a="start" c={SLATE}>United States Capitol</L>

      <Pin x={1707} y={811} fill="#6fa35f" edge="#57894a"><Tree /></Pin>
      <Pin x={2193} y={931} fill="#6fa35f" edge="#57894a"><Tree /></Pin>
      <Pin x={2406} y={797} fill="#7f8d9b" edge="#6c7a87">
        <path d="M0 7V35M-8 15H8" stroke="#fff" strokeWidth={4} />
      </Pin>
      <Pin x={2078} y={1111} fill="#cc7360" edge="#b65d4b">
        <path d="M-7 8V32M7 8V32M-7 20H7" stroke="#fff" strokeWidth={4.500} />
      </Pin>
    </svg>
  );
}

function Chevron({ className = "" }: { className?: string }) {
  return (
    <svg className={className} viewBox="0 0 28 18" fill="none" stroke="#747474" strokeWidth="3.400" strokeLinecap="round" strokeLinejoin="round">
      <path d="M2 2L14 15.500L26 2" />
    </svg>
  );
}

function Refresh() {
  return (
    <svg className="h-7 w-7" viewBox="0 0 28 28" fill="none" stroke="#747474" strokeWidth="3.200" strokeLinecap="round">
      <path d="M19.500 22.500A10 10 0 1 1 22 9" />
      <path d="M15 11.500H24V3" strokeLinejoin="miter" />
    </svg>
  );
}

function ItemIcon({ box, glyph }: { box: string; glyph: string }) {
  return (
    <div className={`flex shrink-0 items-center justify-center rounded-lg bg-[#6c93f5] ${box}`}>
      <svg className={glyph} viewBox="0 0 30 30" fill="#fff">
        <rect x="0" y="0" width="30" height="8" rx="1.500" />
        <rect x="0" y="11" width="13.500" height="8" rx="1.500" />
        <rect x="16.500" y="11" width="13.500" height="8" rx="1.500" />
        <rect x="0" y="22" width="13.500" height="8" rx="1.500" />
        <rect x="16.500" y="22" width="13.500" height="8" rx="1.500" />
      </svg>
    </div>
  );
}

const card = "overflow-hidden rounded-[8px] border-2 border-[#c9c9c9] bg-white shadow-[0_4px_4px_rgba(0,0,0,0.1)]";

function Backdrop() {
  return (
    <svg className="absolute inset-x-0 top-0 h-[400px] w-full" aria-hidden="true">
      <defs>
        <pattern id="topo" width="480" height="400" patternUnits="userSpaceOnUse">
          <g fill="none" stroke="#fff" strokeOpacity=".22" strokeWidth="2">
            <path d="M0 300C30 270 60 330 110 312S150 250 200 320M0 312C30 285 60 345 118 325M0 290C20 255 40 200 8 120S10 20 0 0" />
            <path d="M60 284C70 300 95 304 106 284M44 284C60 316 104 318 120 284M70 284C78 292 92 292 98 284" />
            <path d="M140 320C132 300 150 290 150 280M160 320V284M172 320C168 300 176 296 176 284M190 320C196 300 186 296 190 284" strokeDasharray="16 3" />
            <path d="M210 284C220 310 250 318 300 310S330 290 320 284M275 284C290 304 300 316 312 308S336 300 332 284M370 320C380 290 366 290 372 284M400 320C420 300 440 296 478 316" />
            <path d="M240 320C260 306 280 304 290 320M410 320C440 306 452 310 480 322M340 320C344 310 346 300 344 284" strokeDasharray="8 6" />
            <path d="M18 0C20 10 40 18 66 0M40 0V12M100 12C110 4 112 4 114 0M134 0C120 10 118 12 116 20M160 12L166 0M186 12L190 0M210 0C230 20 240 10 250 0M262 0L270 14M290 0L300 14M304 0L312 14M330 12C336 4 352 4 360 12M400 0C410 14 430 16 440 0" />
            <path d="M470 40C440 80 410 120 470 160S400 260 450 330S300 360 250 340S60 350 0 330M462 60C480 100 430 130 478 190" />
          </g>
        </pattern>
      </defs>
      <rect width="100%" height="400" fill="url(#topo)" />
    </svg>
  );
}

function Field({ label, value, h = "h-[86px]", children }: { label: string; value?: React.ReactNode; h?: string; children?: React.ReactNode }) {
  return (
    <div className={`border-b-2 border-[#c9c9c9] pl-[7px] ${h}`}>
      <div className="pt-px text-[24px] leading-[32px] text-[#444]">{label}</div>
      {value && <div className="mt-[9px] text-[26px] leading-[36px]">{value}</div>}
      {children}
    </div>
  );
}

function SectionBar({ title }: { title: string }) {
  return (
    <div className="ml-[55px] flex h-[84px] w-[1217px] items-center gap-[13px] rounded-[8px] bg-[#f3f3f3] pl-[30px]">
      <Chevron className="mt-2 h-[18px] w-7" />
      <span className="pt-0.5 text-[32px] tracking-[-0.65px]">{title}</span>
    </div>
  );
}

function Check() {
  return <span className="block h-8 w-8 rounded-[4px] border-2 border-[#747474] bg-white" />;
}

const cols = "grid grid-cols-[119px_64px_224px_428px_240px_240px_1fr]";

function HeadCell({ title, sort, pl }: { title: string; sort?: boolean; pl: string }) {
  return (
    <div className={`flex h-[63px] items-center border-r-2 border-[#aeaeae] pr-[26px] pt-[3px] ${pl}`}>
      <span className="flex-1 whitespace-nowrap text-[26px] font-bold tracking-[-0.1px] text-[#444]">{title}</span>
      {sort && (
        <svg className="mr-4 h-[22px] w-4" viewBox="0 0 16 22" fill="none" stroke="#747474" strokeWidth="2.800" strokeLinecap="round">
          <path d="M8 1.500V20M1.500 13.500L8 20L14.500 13.500" />
        </svg>
      )}
      <Chevron className="h-4 w-6" />
    </div>
  );
}

function Row({ n, name, loc, locClass, qty, level }: { n: string; name: string; loc: string; locClass: string; qty: string; level: string }) {
  return (
    <div className={`${cols} h-[60px] items-center border-b-2 border-[#c9c9c9] pt-0.5 text-[26px]`}>
      <span className="pl-[55px] text-[24px] text-[#444]">{n}</span>
      <Check />
      <span className="text-[#3f5ba9]">
        <span className="border-b-2 border-dotted border-[#3f5ba9] leading-[30px] tracking-[-0.1px]">{name}</span>
      </span>
      <span className={`whitespace-nowrap pl-[17px] text-[#3f5ba9] ${locClass}`}>{loc}</span>
      <span className="pl-[16px] tracking-[-0.4px]">{qty}</span>
      <span className="pl-[16px] tracking-[-0.3px]">{level}</span>
      <span />
    </div>
  );
}

export default function App() {
  return (
    <div className="relative h-[1670px] w-[2734px] overflow-hidden bg-[linear-gradient(180deg,#445f9b_0px,#4a65a2_60px,#b9c3dd_290px,#b8c1dc_100%)] pt-[10px] font-['Inter',sans-serif] text-[#181818]">
      <Backdrop />
      <div className="relative">
        <header className={`ml-[7px] h-[274px] w-[2709px] ${card}`}>
          <div className="flex h-[135px] items-start bg-[#f3f3f3] pl-[33px] pr-[34px]">
            <div className="mt-8 flex h-16 w-16 items-center justify-center rounded-[8px] bg-[#5527a0]">
              <svg className="h-[38px] w-[38px]" viewBox="0 0 38 38" fill="#fff">
                <rect y="0" width="38" height="4" />
                <rect y="34" width="38" height="4" />
                <rect x="0" y="8" width="6" height="22" />
                <rect x="9" y="8" width="4" height="22" />
                <rect x="16.500" y="8" width="6" height="22" />
                <rect x="26" y="8" width="3.500" height="22" />
                <rect x="32.500" y="8" width="5.500" height="22" />
              </svg>
            </div>
            <div className="ml-[23px] mt-8 flex-1">
              <div className="text-[26px] leading-[28px] text-[#444]">Product</div>
              <div className="mt-[3px] text-[36px] font-bold leading-[36px] tracking-[-0.3px]">widget</div>
            </div>
            <div className="mt-9 flex h-16 divide-x-2 divide-[#747474] overflow-hidden rounded-[8px] border-2 border-[#747474] bg-white text-[26px] text-[#4a6fd2]">
              <button className="w-[270px] pt-0.5 tracking-[-0.2px]">New Opportunity</button>
              <button className="w-[113px] pt-0.5">Edit</button>
              <button className="w-[144px] pt-0.5">Delete</button>
              <button className="flex w-[62px] items-center justify-center">
                <svg className="mt-1 h-[14px] w-5" viewBox="0 0 20 14"><path d="M0 0H20L10 14Z" fill="#747474" /></svg>
              </button>
            </div>
          </div>
          <div className="flex pl-[33px] pt-[33px]">
            <div className="w-[284px]">
              <div className="text-[24px] leading-[30px] text-[#444]">Product Code</div>
              <div className="mt-1 text-[26px] leading-[36px]">w1</div>
            </div>
            <div className="text-[24px] leading-[30px] text-[#444]">Product Family</div>
          </div>
        </header>

        <div className="ml-[9px] mt-[30px] flex items-start gap-[48px]">
          <div className="flex w-[1332px] flex-col gap-6">
            <section className={`h-[839px] ${card}`}>
              <div className="flex h-[88px] items-center gap-[18px] pl-[25px]">
                <Chevron className="mt-2 h-[18px] w-7" />
                <h2 className="pt-0.5 text-[32px] tracking-[-0.5px]">Fields</h2>
              </div>
              <div className="h-6" />
              <SectionBar title="Product Information" />
              <div className="mt-[43px] flex h-[188px] items-start gap-[48px] pl-[79px]">
                <div className="flex w-[561px] flex-col gap-[11px]">
                  <Field label="Product Name" value="widget" />
                  <Field label="Product Code" value="w1" />
                </div>
                <div className="flex w-[560px] flex-col gap-[11px]">
                  <Field label="Product Family" h="h-[83px]" />
                  <Field label="Active" h="h-[94px]">
                    <span className="mt-[17px] flex h-8 w-8 items-center justify-center rounded-[4px] border-2 border-[#c9c9c9]">
                      <svg className="h-[14px] w-[18px]" viewBox="0 0 18 14" fill="none" stroke="#939393" strokeWidth="3.500"><path d="M2 7.500L6.500 12L16 2" /></svg>
                    </span>
                  </Field>
                </div>
              </div>
              <div className="h-10" />
              <SectionBar title="Description Information" />
              <div className="ml-[79px] mt-[43px] w-[1169px]">
                <Field label="Product Description" value={<span className="tracking-[0.5px]">gotta have 'em!</span>} />
              </div>
              <div className="mt-16 flex h-[90px] items-center gap-[23px] border-t-2 border-[#c9c9c9] pl-[31px]">
                <svg className="mt-2 h-7 w-[18px]" viewBox="0 0 18 28" fill="none" stroke="#747474" strokeWidth="3.400" strokeLinecap="round" strokeLinejoin="round"><path d="M2 2L15.500 14L2 26" /></svg>
                <h2 className="pt-0.5 text-[32px] tracking-[-0.72px]">Additional Fields</h2>
              </div>
            </section>

            <section className={`h-[475px] ${card}`}>
              <div className="h-[164px] bg-[#f3f3f3] pl-[31px] pr-8 pt-8">
                <div className="flex h-16 items-start">
                  <ItemIcon box="h-12 w-12" glyph="h-6 w-6" />
                  <h2 className="ml-6 flex-1 text-[32px] font-bold leading-[50px] tracking-[0.15px]">Product Items (2)</h2>
                  <button className="mr-4 flex h-16 w-[88px] items-center justify-center gap-3 rounded-[8px] border-2 border-[#747474] bg-white pt-1">
                    <svg className="h-[26px] w-[26px]" viewBox="0 0 26 26" fill="none" stroke="#747474">
                      <circle cx="13" cy="13" r="7.800" strokeWidth="3.500" />
                      <circle cx="13" cy="13" r="3.200" fill="#747474" stroke="none" />
                      <path d="M13 0V5M13 21V26M1.700 6.500L6 9M20 17L24.300 19.500M24.300 6.500L20 9M6 17L1.700 19.500" strokeWidth="4.500" />
                    </svg>
                    <svg className="h-2 w-3" viewBox="0 0 12 8"><path d="M0 0H12L6 8Z" fill="#747474" /></svg>
                  </button>
                  <button className="mr-2 flex h-16 w-16 items-center justify-center rounded-[8px] border-2 border-[#747474] bg-white"><Refresh /></button>
                  <button className="h-16 w-[124px] rounded-[8px] border-2 border-[#747474] bg-white text-[26px] text-[#4a6fd2]">New</button>
                </div>
                <p className="mt-[11px] text-[24px] leading-[32px] tracking-[-0.08px]">2 items • Sorted by Product Item Number • Updated a minute ago</p>
              </div>
              <div className={`${cols} h-[70px] border-b-2 border-t-2 border-b-[#dddbda] border-t-[#c9c9c9] bg-[#f3f3f3]`}>
                <span />
                <span className="pt-4"><Check /></span>
                <HeadCell title="Product..." sort pl="" />
                <HeadCell title="Location" pl="pl-[17px]" />
                <HeadCell title="Quantity ..." pl="pl-[16px]" />
                <HeadCell title="Stocking ..." pl="pl-[16px]" />
                <span />
              </div>
              <Row n="1" name="PI-0002" loc="1801 K Street Northwest Washi..." locClass="tracking-[-0.12px]" qty="5.00" level="low" />
              <Row n="2" name="PI-0001" loc="8280 Greensboro Drive McLea..." locClass="tracking-[-0.32px]" qty="100.00" level="OK" />
              <div className="flex h-[30px] items-center border-b-2 border-t border-b-[#c9c9c9] border-t-[#e8e8e8] bg-[#fafafa] pl-[5px]">
                <span className="h-4 w-[1235px] rounded-full bg-[#c1c1c1]" />
              </div>
              <a className="flex h-[86px] items-center justify-center text-[26px] tracking-[-0.3px] text-[#3f5ba9]">View All</a>
            </section>
          </div>

          <section className={`h-[1193px] w-[1332px] ${card}`}>
            <div className="flex h-[112px] items-center pl-8 pr-[39px]">
              <ItemIcon box="h-12 w-12" glyph="h-[29px] w-[29px]" />
              <h2 className="ml-6 flex-1 pt-0.5 text-[32px] font-bold">Product Items</h2>
              <button className="flex h-16 w-16 items-center justify-center rounded-[8px] border-2 border-[#747474] bg-white"><Refresh /></button>
            </div>
            <div className="relative h-[748px] overflow-hidden font-['Roboto',sans-serif]">
              <MapCanvas />
              <div className="absolute left-[20px] top-[699px] flex text-[38px] font-medium leading-[40px] tracking-[-1.5px] font-['Lato',sans-serif] [text-shadow:0_0_3px_#fff]">
                <span className="text-[#5f7ee6]">G</span>
                <span className="text-[#c5573f]">o</span>
                <span className="text-[#dfb93f]">o</span>
                <span className="text-[#5f7ee6]">g</span>
                <span className="text-[#5f9e55]">l</span>
                <span className="text-[#c5573f]">e</span>
              </div>
              <div className="absolute left-[6px] top-[105px] h-[275px] w-[154px] rounded-[14px] bg-white pl-6 text-[26px] text-black shadow-[0_4px_14px_rgba(0,0,0,0.3)]">
                <svg className="absolute left-[92px] top-[34px] h-7 w-7" viewBox="0 0 28 28" stroke="#666" strokeWidth="3.500"><path d="M1 1L27 27M27 1L1 27" /></svg>
                <div className="mt-[130px] font-bold leading-[34px]">PI-0001</div>
                <div className="mt-[30px] font-light leading-[34px]">100</div>
                <svg className="absolute left-[52px] top-[274px] h-[22px] w-[50px]" viewBox="0 0 50 22"><path d="M0 0H50L25 22Z" fill="#fff" /></svg>
              </div>
              <div className="absolute left-[57px] top-[403px]"><Marker color="#98f552" /></div>
              <div className="absolute left-[1163px] top-[579px]"><Marker color="#fcfd80" /></div>
              <div className="absolute left-5 top-5 flex h-20 items-center rounded-[4px] bg-white text-[36px] shadow-[0_2px_8px_rgba(0,0,0,0.3)]">
                <span className="flex h-full w-[139px] items-center justify-center font-medium text-black shadow-[2px_0_4px_rgba(0,0,0,0.08)]">Map</span>
                <span className="w-[197px] text-center text-[#565656]">Satellite</span>
              </div>
              <div className="absolute left-[1230px] top-[394px] flex h-20 w-20 items-center justify-center rounded-[4px] bg-white shadow-[0_2px_8px_rgba(0,0,0,0.3)]">
                <svg className="h-[60px] w-[36px]" viewBox="0 0 36 60" fill="#e6c04c" stroke="#8f7a45" strokeWidth="1.500">
                  <path d="M9 21H27L34 43L29 45L27 41V59H19.500V45H16.500V59H9V41L7 45L2 43Z" />
                  <path d="M11 20H25L18 31Z" fill="#c98a3c" stroke="none" />
                  <circle cx="18" cy="11" r="10" />
                </svg>
              </div>
              <div className="absolute left-[1230px] top-[538px] flex h-[162px] w-20 flex-col items-center rounded-[4px] bg-white shadow-[0_2px_8px_rgba(0,0,0,0.3)]">
                <svg className="h-20 w-20" viewBox="0 0 80 80" stroke="#666" strokeWidth="8"><path d="M22 40H58M40 22V58" /></svg>
                <span className="h-[2px] w-[60px] bg-[#e6e6e6]" />
                <svg className="h-20 w-20" viewBox="0 0 80 80" stroke="#666" strokeWidth="8"><path d="M22 42H58" /></svg>
              </div>
              <div className="absolute bottom-0 right-0 flex h-7 items-center gap-6 whitespace-nowrap bg-[#f5f5f5]/70 pl-[10px] pr-[10px] pt-0.5 text-[20px] text-black">
                <span>Keyboard shortcuts</span>
                <span>Map data ©2024 Google</span>
                <span>Terms</span>
                <span>Report a map error</span>
              </div>
            </div>
            <div className="pl-6 pt-[26px]">
              <h3 className="text-[26px] font-bold leading-[36px] tracking-[0.23px]">Number of mapped Product Items by Stocking Level</h3>
              <div className="ml-[7px] mt-[9px] flex gap-4 text-[26px]">
                <div className="flex h-[116px] w-[170px] items-center rounded-[32px] border-2 border-[#c9c9c9] pl-[25px]">
                  <span className="w-12 tracking-[-0.8px]">low</span><Marker color="#fcfd80" /><b className="ml-[8px]">1</b>
                </div>
                <div className="flex h-[116px] w-[166px] items-center rounded-[32px] border-2 border-[#c9c9c9] pl-[25px]">
                  <span className="w-[45px] tracking-[-0.8px]">OK</span><Marker color="#98f552" /><b className="ml-[8px]">1</b>
                </div>
              </div>
              <div className="mt-10 flex gap-6">
                <ItemIcon box="h-16 w-16" glyph="h-[39px] w-[39px]" />
                <div>
                  <div className="text-[26px] leading-[40px] tracking-[-0.1px] text-[#3f5ba9]">PI-0001</div>
                  <div className="flex text-[24px] leading-[40px] tracking-[0.05px] text-[#444]">
                    <span className="mr-6 font-medium text-black">Stocking Level</span>
                    <span className="mr-8">OK</span>
                    <span className="mr-6 font-medium text-black">Quantity On Hand</span>
                    <span>100</span>
                  </div>
                </div>
              </div>
            </div>
          </section>
        </div>
      </div>
    </div>
  );
}
